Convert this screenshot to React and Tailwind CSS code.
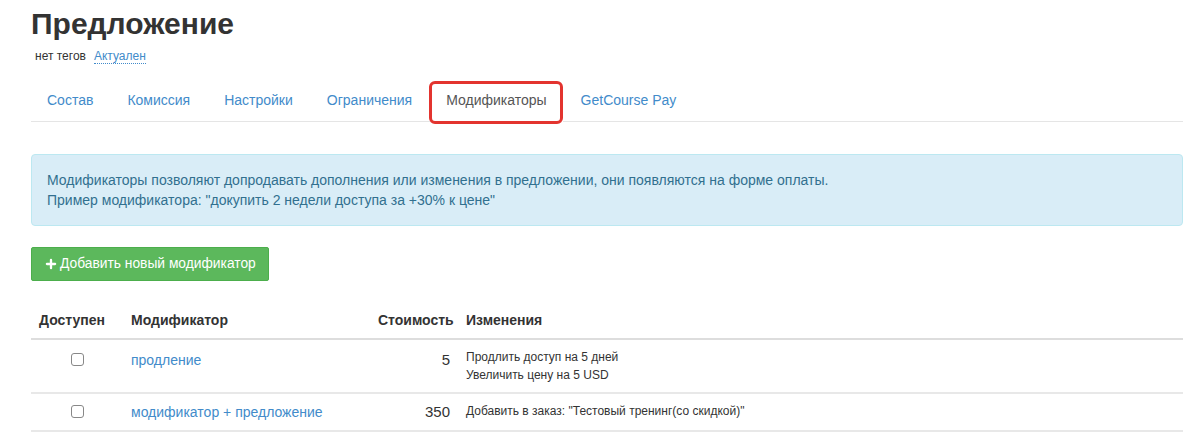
import { Plus } from "lucide-react";

const tabs = ["Состав", "Комиссия", "Настройки", "Ограничения", "Модификаторы", "GetCourse Pay"];

const rows = [
  {
    name: "продление",
    price: "5",
    changes: ["Продлить доступ на 5 дней", "Увеличить цену на 5 USD"],
  },
  {
    name: "модификатор + предложение",
    price: "350",
    changes: ['Добавить в заказ: "Тестовый тренинг(со скидкой)"'],
  },
];

const App = () => {
  return (
    <div className="min-h-[440px] bg-white pl-[31px] pr-[16px] text-[14px] text-[#333] font-['Liberation_Sans',Arial,sans-serif]">
      {/* Header */}
      <h1 className="pt-[7px] text-[30px] leading-[33px] font-bold text-[#333]">Предложение</h1>
      <div className="mt-[6px] flex items-center gap-[8px] pl-[4px] text-[12px] leading-5">
        <span>нет тегов</span>
        <span className="text-[#428bca] leading-[14px] border-b border-dotted border-[#428bca]">Актуален</span>
      </div>

      {/* Tabs */}
      <div className="mt-[13px] flex border-b border-[#e5e5e5]">
        {tabs.map((tab) => {
          const active = tab === "Модификаторы";
          return (
            <div
              key={tab}
              className={
                active
                  ? "relative mr-[2px] -mb-px border border-transparent px-[15px] py-[10px] leading-5 text-[#555] bg-white"
                  : "mr-[2px] border border-transparent px-[15px] py-[10px] leading-5 text-[#428bca]"
              }
            >
              {tab}
              {active && (
                <span className="absolute left-[-2px] right-[-1px] top-[1px] bottom-[-3px] rounded-[6px] border-[3px] border-[#e3342f]" />
              )}
            </div>
          );
        })}
      </div>

      {/* Info alert */}
      <div className="mt-[32px] rounded-[4px] border border-[#bce8f1] bg-[#d9edf7] p-[15px] leading-5 text-[#31708f]">
        <p>Модификаторы позволяют допродавать дополнения или изменения в предложении, они появляются на форме оплаты.</p>
        <p>Пример модификатора: "докупить 2 недели доступа за +30% к цене"</p>
      </div>

      <button className="mt-[21px] flex items-center gap-[2px] rounded-[2px] border border-[#4cae4c] bg-[#5cb85c] px-[12px] py-[6px] text-[13.8px] leading-5 text-white">
        <Plus size={14} strokeWidth={4} />
        Добавить новый модификатор
      </button>

      {/* Table */}
      <div className="mt-[21px]">
        <div className="grid grid-cols-[92px_247px_88px_1fr] border-b-2 border-[#ddd] font-bold leading-5">
          <div className="p-2">Доступен</div>
          <div className="p-2">Модификатор</div>
          <div className="p-2 text-right">Стоимость</div>
          <div className="p-2">Изменения</div>
        </div>
        {rows.map((row) => {
          const tall = row.changes.length > 1;
          return (
            <div key={row.name} className="grid grid-cols-[92px_247px_88px_1fr] border-b-2 border-[#e8e8e8] leading-5">
              <div className={tall ? "flex justify-center p-2 pt-[13px]" : "flex justify-center p-2 pt-[11px]"}>
                <span className="block h-[13px] w-[13px] rounded-[3px] border border-[#888] bg-white" />
              </div>
              <div className={tall ? "p-2 pt-[10px] text-[#428bca]" : "p-2 text-[#428bca]"}>{row.name}</div>
              <div className={tall ? "p-2 pt-[10px] text-right text-[15px]" : "p-2 text-right text-[15px]"}>{row.price}</div>
              <div className="p-2 text-[12px] leading-[18px]">
                {row.changes.map((c) => (
                  <div key={c}>{c}</div>
                ))}
              </div>
            </div>
          );
        })}
      </div>
    </div>
  );
};

export default App;
